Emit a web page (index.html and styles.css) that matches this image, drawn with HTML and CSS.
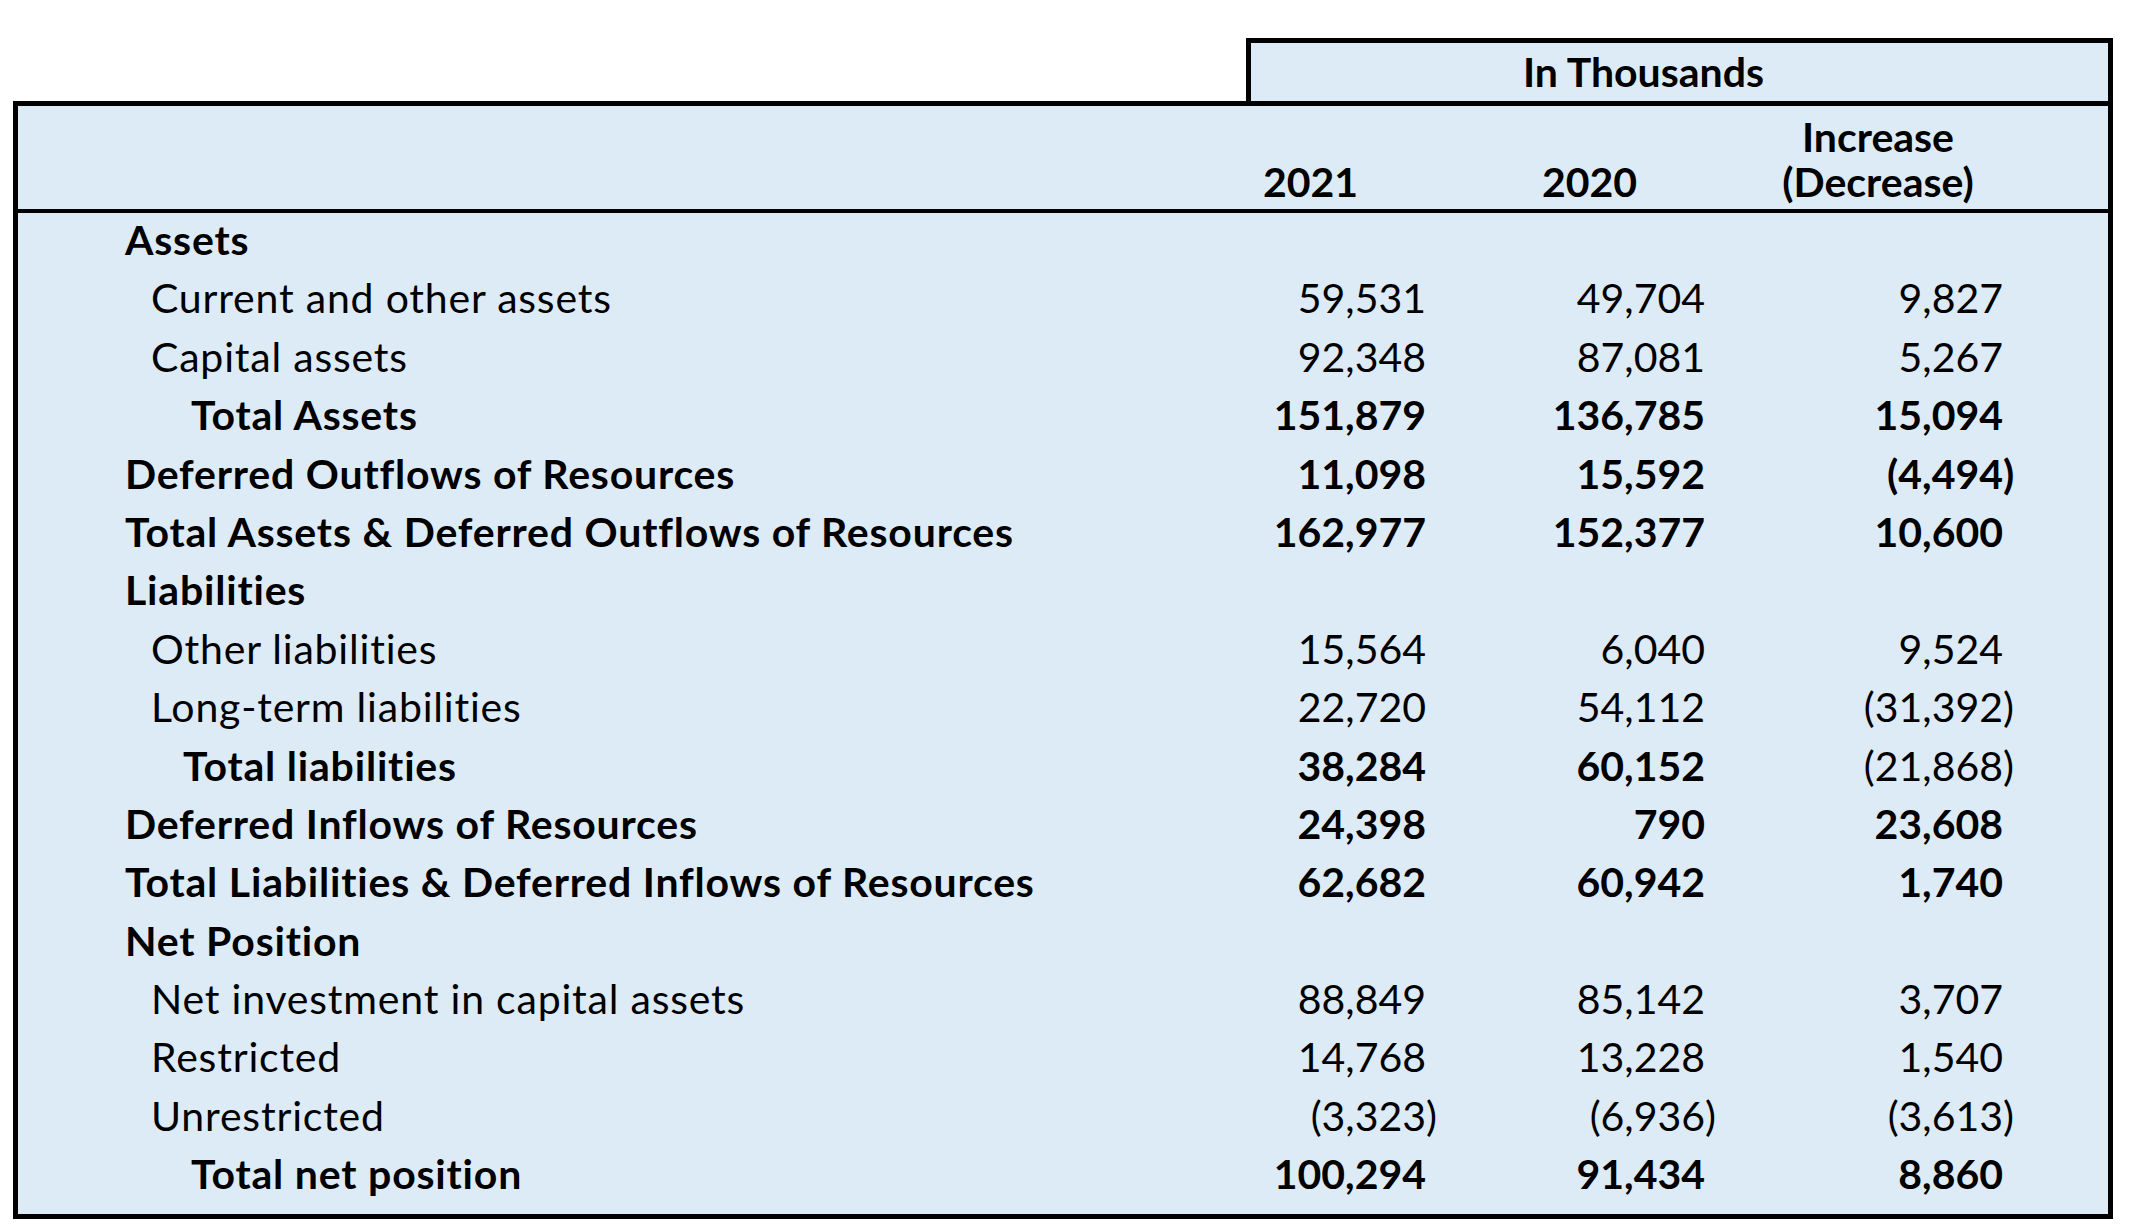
FILE: index.html
```html
<!DOCTYPE html>
<html>
<head>
<meta charset="utf-8">
<title>Statement of Net Position</title>
<link rel="stylesheet" href="styles.css">
</head>
<body>
<div class="sheet">
  <div class="unit-box"><span class="unit-text">In Thousands</span></div>
  <div class="table">
    <div class="head">
      <div class="hlabel"></div>
      <div class="hcell">2021</div>
      <div class="hcell">2020</div>
      <div class="hcell">Increase<br>(Decrease)</div>
    </div>
    <div class="body">
      <div class="row bold"><div class="lbl l0">Assets</div><div class="num"></div><div class="num"></div><div class="num"></div></div>
      <div class="row"><div class="lbl l1">Current and other assets</div><div class="num"><span class="v">59,531</span><span class="cp"></span></div><div class="num"><span class="v">49,704</span><span class="cp"></span></div><div class="num"><span class="v">9,827</span><span class="cp"></span></div></div>
      <div class="row"><div class="lbl l1">Capital assets</div><div class="num"><span class="v">92,348</span><span class="cp"></span></div><div class="num"><span class="v">87,081</span><span class="cp"></span></div><div class="num"><span class="v">5,267</span><span class="cp"></span></div></div>
      <div class="row bold"><div class="lbl l2">Total Assets</div><div class="num"><span class="v">151,879</span><span class="cp"></span></div><div class="num"><span class="v">136,785</span><span class="cp"></span></div><div class="num"><span class="v">15,094</span><span class="cp"></span></div></div>
      <div class="row bold"><div class="lbl l0">Deferred Outflows of Resources</div><div class="num"><span class="v">11,098</span><span class="cp"></span></div><div class="num"><span class="v">15,592</span><span class="cp"></span></div><div class="num"><span class="v">(4,494</span><span class="cp">)</span></div></div>
      <div class="row bold"><div class="lbl l0">Total Assets &amp; Deferred Outflows of Resources</div><div class="num"><span class="v">162,977</span><span class="cp"></span></div><div class="num"><span class="v">152,377</span><span class="cp"></span></div><div class="num"><span class="v">10,600</span><span class="cp"></span></div></div>
      <div class="row bold"><div class="lbl l0">Liabilities</div><div class="num"></div><div class="num"></div><div class="num"></div></div>
      <div class="row"><div class="lbl l1">Other liabilities</div><div class="num"><span class="v">15,564</span><span class="cp"></span></div><div class="num"><span class="v">6,040</span><span class="cp"></span></div><div class="num"><span class="v">9,524</span><span class="cp"></span></div></div>
      <div class="row"><div class="lbl l1">Long-term liabilities</div><div class="num"><span class="v">22,720</span><span class="cp"></span></div><div class="num"><span class="v">54,112</span><span class="cp"></span></div><div class="num"><span class="v">(31,392</span><span class="cp">)</span></div></div>
      <div class="row bold"><div class="lbl l2b">Total liabilities</div><div class="num"><span class="v">38,284</span><span class="cp"></span></div><div class="num"><span class="v">60,152</span><span class="cp"></span></div><div class="num reg"><span class="v">(21,868</span><span class="cp">)</span></div></div>
      <div class="row bold"><div class="lbl l0">Deferred Inflows of Resources</div><div class="num"><span class="v">24,398</span><span class="cp"></span></div><div class="num"><span class="v">790</span><span class="cp"></span></div><div class="num"><span class="v">23,608</span><span class="cp"></span></div></div>
      <div class="row bold"><div class="lbl l0">Total Liabilities &amp; Deferred Inflows of Resources</div><div class="num"><span class="v">62,682</span><span class="cp"></span></div><div class="num"><span class="v">60,942</span><span class="cp"></span></div><div class="num"><span class="v">1,740</span><span class="cp"></span></div></div>
      <div class="row bold"><div class="lbl l0">Net Position</div><div class="num"></div><div class="num"></div><div class="num"></div></div>
      <div class="row"><div class="lbl l1">Net investment in capital assets</div><div class="num"><span class="v">88,849</span><span class="cp"></span></div><div class="num"><span class="v">85,142</span><span class="cp"></span></div><div class="num"><span class="v">3,707</span><span class="cp"></span></div></div>
      <div class="row"><div class="lbl l1">Restricted</div><div class="num"><span class="v">14,768</span><span class="cp"></span></div><div class="num"><span class="v">13,228</span><span class="cp"></span></div><div class="num"><span class="v">1,540</span><span class="cp"></span></div></div>
      <div class="row"><div class="lbl l1">Unrestricted</div><div class="num"><span class="v">(3,323</span><span class="cp">)</span></div><div class="num"><span class="v">(6,936</span><span class="cp">)</span></div><div class="num"><span class="v">(3,613</span><span class="cp">)</span></div></div>
      <div class="row bold"><div class="lbl l2">Total net position</div><div class="num"><span class="v">100,294</span><span class="cp"></span></div><div class="num"><span class="v">91,434</span><span class="cp"></span></div><div class="num"><span class="v">8,860</span><span class="cp"></span></div></div>
    </div>
  </div>
</div>
</body>
</html>
```

FILE: styles.css
```css
html, body {
  margin: 0;
  padding: 0;
  background: #ffffff;
}

body {
  font-family: "Lato", "Open Sans", "Liberation Sans", sans-serif;
  font-size: 41px;
  color: #000000;
}

.sheet {
  width: 2100px;
  margin: 38px 0 0 13px;
}

.unit-box {
  margin-left: 1233px;
  height: 58px;
  border: 5px solid #000;
  border-bottom: none;
  background: #ddebf7;
  display: flex;
  align-items: center;
  justify-content: center;
  padding-right: 72px;
}

.unit-text {
  font-weight: 700;
  line-height: 58px;
}

.table {
  border: 5px solid #000;
  background: #ddebf7;
}

.head {
  height: 103px;
  border-bottom: 4px solid #000;
  display: grid;
  grid-template-columns: 1fr 279px 279px 298px;
  padding-right: 90px;
  align-items: end;
}

.hcell {
  font-weight: 700;
  text-align: center;
  line-height: 45px;
  padding-left: 18px;
  padding-bottom: 5px;
}

.body {
  padding-bottom: 8px;
}

.row {
  display: grid;
  grid-template-columns: 1fr 279px 279px 298px;
  box-sizing: border-box;
  padding-right: 90px;
  padding-bottom: 4px;
  height: 58.4px;
  line-height: 54.4px;
  white-space: nowrap;
}

.bold {
  font-weight: 700;
}

.reg {
  font-weight: 400;
}

.lbl {
  letter-spacing: 0.8px;
}

.lbl.l0 { padding-left: 107px; }
.lbl.l1 { padding-left: 133px; }
.lbl.l2 { padding-left: 173px; }
.lbl.l2b { padding-left: 165px; }

.num {
  display: flex;
  justify-content: flex-end;
}

.cp {
  display: inline-block;
  width: 15px;
  text-align: left;
}
```
